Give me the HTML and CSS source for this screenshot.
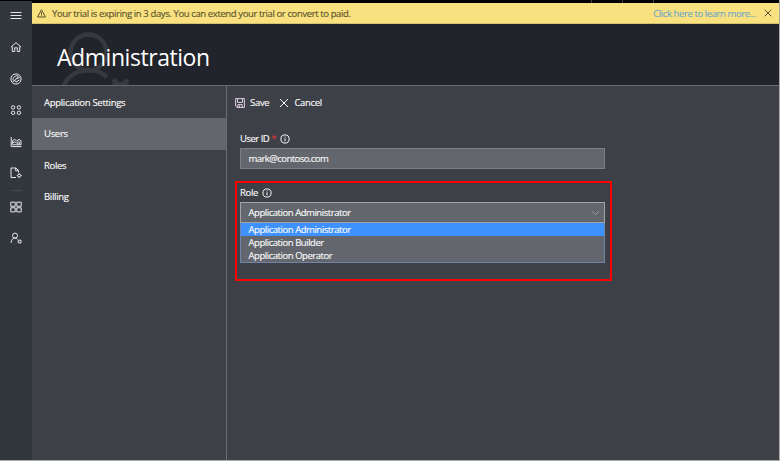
FILE: index.html
```
<!DOCTYPE html>
<html lang="en">
<head>
<meta charset="utf-8">
<title>Administration</title>
<link rel="stylesheet" href="styles.css">
</head>
<body>
<div class="topstrip"><i></i><i></i><i></i></div>
<div class="app">
  <nav class="rail">
    <svg viewBox="0 0 12 12"><path d="M.5 2.5h11M.5 5.5h11M.5 8.5h11"/></svg>
    <svg viewBox="0 0 12 12"><path d="M1 6.2 6 1.600l5 4.600M2.300 5.400v5.100h2.400V6.800h2.600v3.700h2.400V5.400"/></svg>
    <svg viewBox="0 0 12 12"><circle cx="6" cy="6" r="5.100"/><path d="M2.500 9.300 5 6.800M3.300 7.500C2.300 5 4.600 2.700 7.700 2.800c.8 1.500-.3 2.400-1.500 3-1.700.8-1.500 2.300-.2 3.300M6.500 6 9.800 4.200M6 9.100l3.500-2.200"/></svg>
    <svg viewBox="0 0 12 12"><circle cx="3.100" cy="3.400" r="1.700"/><circle cx="8.900" cy="3.400" r="1.700"/><circle cx="3.100" cy="8.800" r="1.700"/><circle cx="8.900" cy="8.800" r="1.700"/></svg>
    <svg viewBox="0 0 12 12"><path d="M1.200 1v9.600H11.500M2.700 8.800V4.500L4.500 3.300l2 1.500 2.500-1.300 2 1.200v4.100zM2.700 6.800l2-1 2 1.200M7.200 7a1.200 1.200 0 1 0 2.400 0 1.200 1.200 0 1 0-2.400 0"/></svg>
    <svg viewBox="0 0 12 12"><path d="M6 10.500H1V1h5l2.500 2.500v2M5.700 1v2.800h2.800"/><circle cx="9.200" cy="8.600" r="1.500"/><path d="M9.200 6.200v.9M9.200 10.100v.9M6.800 8.600h.9M10.700 8.600h.9"/></svg>
    <hr>
    <svg viewBox="0 0 12 12"><path d="M.8 1.200h4.400v4.100H.8zM6.800 1.200h4.400v4.100H6.800zM.8 6.800h4.400v4.100H.8zM6.800 6.800h4.400v4.100H6.800z"/></svg>
    <svg viewBox="0 0 12 12"><circle cx="5" cy="3.600" r="2.500"/><path d="M1.100 10.800c.2-3 1.500-4.700 3.900-4.700 1.200 0 2 .4 2.600 1.100M8.300 8.200H11v2.700H8.300z"/></svg>
  </nav>
  <div class="main">
    <div class="banner">
      <svg class="warn" viewBox="0 0 9 9"><path d="M4.500.8 8.500 8h-8zM4.500 3.200v2.500M4.500 6.300v.8"/></svg>
      <span class="msg">Your trial is expiring in 3 days. You can extend your trial or convert to paid.</span>
      <a class="more">Click here to learn more...</a>
      <svg class="close" viewBox="0 0 8 8"><path d="M.7.700l6.600 6.600M7.300.700.7 7.300"/></svg>
    </div>
    <header class="hero">
      <svg class="mark" viewBox="0 0 80 61"><circle cx="32.500" cy="28.500" r="18"/><path d="M7.200 62A28 28 0 0 1 51 53"/><path class="gear" d="m56 56 4-1.500 2 3.500h5l2-3.500 4 1.500-1.500 4 3 2H54l3-2z"/></svg>
      <h1>Administration</h1>
    </header>
    <div class="content">
      <ul class="menu">
        <li><span>Application Settings</span></li>
        <li class="active"><span>Users</span></li>
        <li><span>Roles</span></li>
        <li><span>Billing</span></li>
      </ul>
      <section class="panel">
        <div class="tools">
          <svg class="save" viewBox="0 0 10 10"><path d="M.6.6h8.800v8.800H2L.6 8zM2.500.6v3.800h5V.6M2.800 9.400V6.600h4.400v2.800M4.500 7.500v1.900"/></svg>
          <span>Save</span>
          <svg class="x" viewBox="0 0 10 10"><path d="m1 1 8 8M9 1 1 9"/></svg>
          <span>Cancel</span>
        </div>
        <div class="field">
          <label class="uid">User ID <b>*</b><svg class="info" viewBox="0 0 10 10"><circle cx="5" cy="5" r="4.100"/><path d="M5 4.300v3M5 2.500v1"/></svg></label>
          <div class="input mail">mark@contoso.com</div>
        </div>
        <div class="callout">
          <label>Role<svg class="info" viewBox="0 0 10 10"><circle cx="5" cy="5" r="4.100"/><path d="M5 4.300v3M5 2.500v1"/></svg></label>
          <div class="input select"><span>Application Administrator</span><svg viewBox="0 0 10 6"><path d="m1 .8 4 4 4-4"/></svg></div>
          <div class="options">
            <div class="picked">Application Administrator</div>
            <div>Application Builder</div>
            <div>Application Operator</div>
          </div>
        </div>
      </section>
    </div>
  </div>
</div>
</body>
</html>
```
FILE: styles.css
```
* { box-sizing: border-box; }
body {
  margin: 0; width: 780px; height: 461px; overflow: hidden;
  display: flex; flex-direction: column;
  background: #3e4047; color: #f8f8f8;
  font: 9.5px/13px "Open Sans", "Noto Sans", sans-serif;
  letter-spacing: -.3px;
  -webkit-text-stroke: .15px currentColor;
  border-right: 1px solid #aaa; border-bottom: 1px solid #aaa;
}
svg { fill: none; stroke: currentColor; stroke-width: 1; flex: none; display: block; }
.topstrip { height: 3px; background: #000; display: flex; gap: 30px; padding-left: 591px; flex: none; }
.topstrip i { width: 1px; background: #444; }
.app { display: flex; flex: 1; min-height: 0; }
.rail { width: 32px; margin-top: -2px; background: #32363d; display: flex; flex-direction: column; align-items: center; padding-top: 9px; color: #e8e8e8; flex: none; }
.rail svg { width: 12px; height: 12px; margin-bottom: 19.400px; }
.rail hr { width: 11px; height: 1px; border: 0; background: #484a4d; margin: -8.500px 0 10px; flex: none; }
.main { flex: 1; display: flex; flex-direction: column; min-width: 0; }
.banner { height: 21px; background: #f8e17e; border-bottom: 1px solid #d4c16f; color: #5b5330; display: flex; align-items: center; padding: 0 7px 0 5px; flex: none; }
.warn { width: 9px; height: 9px; margin-right: 6px; }
.msg { flex: 1; letter-spacing: -.385px; white-space: nowrap; }
.more { color: #71a9cb; margin-right: 8px; letter-spacing: -.4px; }
.close { width: 8px; height: 8px; }
.hero { height: 61px; background: #21242b; position: relative; overflow: hidden; flex: none; }
.mark { position: absolute; left: 24px; top: 0; width: 80px; height: 61px; color: #36393d; stroke-width: 4.500; }
.mark .gear { fill: currentColor; stroke-width: .5; }
h1 { position: relative; margin: 0; padding: 17px 0 0 25px; font-size: 23px; line-height: 32px; font-weight: 400; letter-spacing: -.45px; color: #fff; -webkit-text-stroke: 0; }
.content { flex: 1; display: flex; border-top: 1px solid #696969; background: #3e4047; }
.menu { list-style: none; margin: 0; padding: 1px 0 0; width: 195px; border-right: 1px solid #6b6c6d; }
.menu li { height: 31.250px; padding: 0 12px; display: flex; align-items: center; }
.menu .active { background: #63666d; }
.panel { flex: 1; padding: 10px 0 0 8px; }
.tools { display: flex; align-items: center; height: 13px; }
.save { width: 10px; height: 10px; margin-right: 5px; color: #ddd0e4; }
.x { width: 10px; height: 10px; margin: 0 5px 0 10px; }
.field { margin: 23px 0 0 5px; width: 365px; }
label { display: flex; align-items: center; height: 13px; white-space: pre; }
.uid { letter-spacing: -.5px; }
label b { color: #d43a31; font-weight: 400; }
.info { width: 10px; height: 10px; margin-left: 4px; }
.input { height: 21px; margin-top: 3px; border: 1px solid #7d8083; background: #63666d; padding: 0 7.500px; display: flex; align-items: center; }
.mail { letter-spacing: -.55px; }
.callout { width: 377px; height: 100px; margin-top: 12px; border: 2px solid #f00; padding: 3px 5px 0 3px; }
.select { justify-content: space-between; border-color: #a1a3a5; padding-right: 4px; letter-spacing: -.45px; }
.select svg { width: 9px; height: 6px; color: #a0a1a2; }
.options { border: 1px solid #7185aa; border-top: 0; background: #63666d; height: 40px; letter-spacing: -.45px; }
.options div { height: 13px; line-height: 13px; padding: 0 7.500px; }
.options .picked { background: #3e92ff; }
```
